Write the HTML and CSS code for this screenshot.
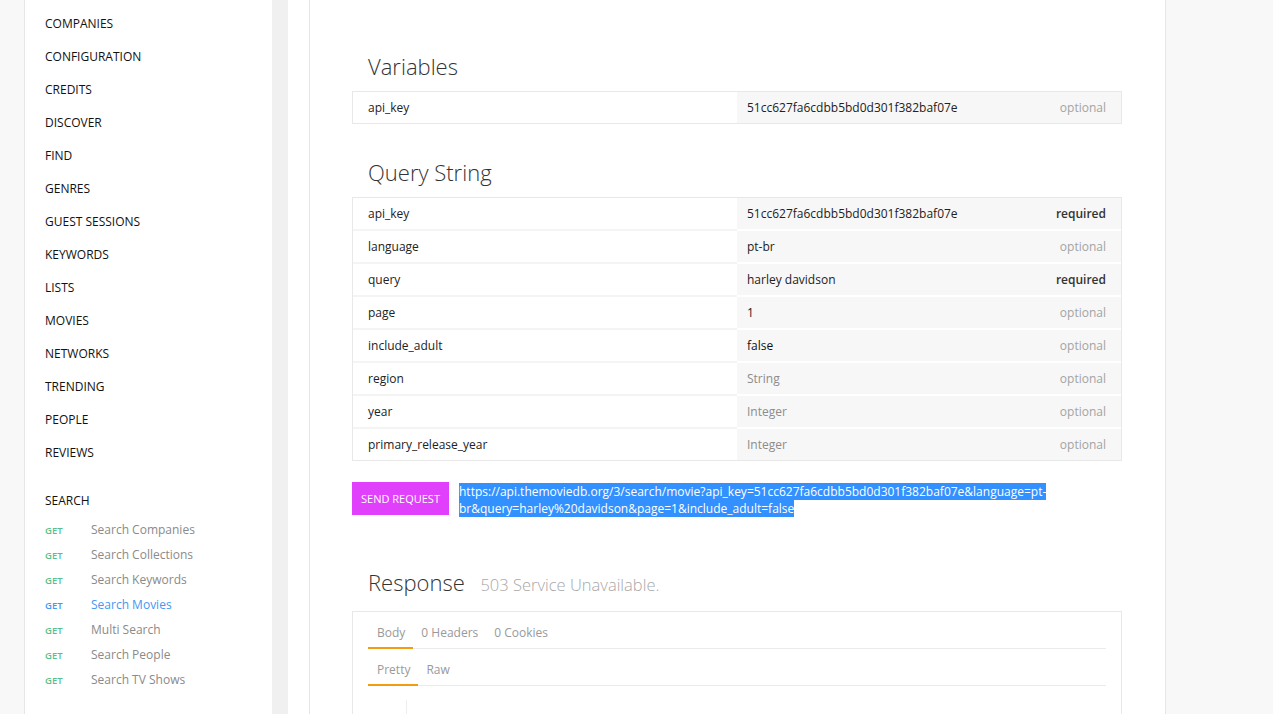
FILE: index.html
```html
<!DOCTYPE html>
<html>
<head>
<meta charset="utf-8">
<title>TMDB API - Search Movies</title>
<link rel="stylesheet" href="styles.css">
</head>
<body>
<div class="page">
  <nav class="sidebar">
    <ul class="groups">
      <li>COMPANIES</li>
      <li>CONFIGURATION</li>
      <li>CREDITS</li>
      <li>DISCOVER</li>
      <li>FIND</li>
      <li>GENRES</li>
      <li>GUEST SESSIONS</li>
      <li>KEYWORDS</li>
      <li>LISTS</li>
      <li>MOVIES</li>
      <li>NETWORKS</li>
      <li>TRENDING</li>
      <li>PEOPLE</li>
      <li>REVIEWS</li>
    </ul>
    <div class="group-title">SEARCH</div>
    <ul class="endpoints">
      <li><span class="method">GET</span><span class="ep">Search Companies</span></li>
      <li><span class="method">GET</span><span class="ep">Search Collections</span></li>
      <li><span class="method">GET</span><span class="ep">Search Keywords</span></li>
      <li class="active"><span class="method">GET</span><span class="ep">Search Movies</span></li>
      <li><span class="method">GET</span><span class="ep">Multi Search</span></li>
      <li><span class="method">GET</span><span class="ep">Search People</span></li>
      <li><span class="method">GET</span><span class="ep">Search TV Shows</span></li>
    </ul>
  </nav>
  <div class="scroll-track"></div>
  <main class="main">
    <h2 class="section-title">Variables</h2>
    <div class="params">
      <div class="row">
        <div class="name">api_key</div>
        <div class="value"><span>51cc627fa6cdbb5bd0d301f382baf07e</span><span class="flag">optional</span></div>
      </div>
    </div>

    <h2 class="section-title second">Query String</h2>
    <div class="params">
      <div class="row">
        <div class="name">api_key</div>
        <div class="value"><span>51cc627fa6cdbb5bd0d301f382baf07e</span><span class="flag req">required</span></div>
      </div>
      <div class="row">
        <div class="name">language</div>
        <div class="value"><span>pt-br</span><span class="flag">optional</span></div>
      </div>
      <div class="row">
        <div class="name">query</div>
        <div class="value"><span>harley davidson</span><span class="flag req">required</span></div>
      </div>
      <div class="row">
        <div class="name">page</div>
        <div class="value"><span>1</span><span class="flag">optional</span></div>
      </div>
      <div class="row">
        <div class="name">include_adult</div>
        <div class="value"><span class="strong">false</span><span class="flag">optional</span></div>
      </div>
      <div class="row">
        <div class="name">region</div>
        <div class="value"><span class="placeholder">String</span><span class="flag">optional</span></div>
      </div>
      <div class="row">
        <div class="name">year</div>
        <div class="value"><span class="placeholder">Integer</span><span class="flag">optional</span></div>
      </div>
      <div class="row">
        <div class="name">primary_release_year</div>
        <div class="value"><span class="placeholder">Integer</span><span class="flag">optional</span></div>
      </div>
    </div>

    <div class="actions">
      <button class="send">SEND REQUEST</button>
      <div class="url"><span class="selected">https://api.themoviedb.org/3/search/movie?api_key=51cc627fa6cdbb5bd0d301f382baf07e&amp;language=pt-<br>br&amp;query=harley%20davidson&amp;page=1&amp;include_adult=false</span></div>
    </div>

    <h2 class="section-title response-title">Response <span class="status">503 Service Unavailable.</span></h2>
    <div class="response">
      <div class="tabs">
        <span class="tab active">Body</span>
        <span class="tab">0 Headers</span>
        <span class="tab">0 Cookies</span>
      </div>
      <div class="tabs sub">
        <span class="tab active">Pretty</span>
        <span class="tab">Raw</span>
      </div>
      <div class="code">
        <div class="gutter"></div>
        <div class="code-body"></div>
      </div>
    </div>
  </main>
</div>
</body>
</html>
```

FILE: styles.css
```css
* { box-sizing: border-box; }

html, body {
  margin: 0;
  padding: 0;
}

body {
  background: #f8f8f8;
  font-family: "Open Sans", "Liberation Sans", sans-serif;
  font-size: 12px;
  color: #333;
  height: 714px;
  overflow: hidden;
}

.page {
  display: flex;
  margin-left: 24px;
  width: 1142px;
  height: 714px;
  background: #fff;
  border-left: 1px solid #e6e6e6;
  border-right: 1px solid #e6e6e6;
}

/* Sidebar */
.sidebar {
  width: 247px;
  flex: none;
  padding: 7px 0 0 20px;
}

.groups, .endpoints {
  list-style: none;
  margin: 0;
  padding: 0;
}

.groups li {
  line-height: 33px;
  color: #111;
  font-size: 12px;
}

.group-title {
  margin-top: 15px;
  line-height: 33px;
  color: #111;
  font-size: 12px;
}

.endpoints li {
  display: flex;
  align-items: center;
  height: 25px;
}

.method {
  width: 46px;
  font-size: 9.5px;
  font-weight: 600;
  color: #5bbf8b;
  padding-top: 1px;
}

.ep {
  color: #8a8a8a;
  font-size: 12px;
}

.endpoints li.active .method,
.endpoints li.active .ep {
  color: #4498f2;
}

.scroll-track {
  width: 16px;
  flex: none;
  background: #f0f0f0;
  margin-right: 21px;
}

/* Main */
.main {
  flex: 1;
  border-left: 1px solid #e6e6e6;
  padding: 47px 43px 0 42px;
}

.section-title {
  margin: 0 0 6px;
  padding-left: 16px;
  font-size: 22px;
  font-weight: 300;
  line-height: 38px;
  color: #333;
}

.section-title.second {
  margin-top: 29px;
}

.params {
  width: 770px;
  border: 1px solid #e8e8e8;
}

.row {
  display: grid;
  grid-template-columns: 384px 1fr;
  height: 31px;
}

.row + .row {
  height: 33px;
}

.row + .row .name {
  border-top: 2px solid #f4f4f4;
}

.row + .row .value {
  border-top: 2px solid #fff;
}

.name {
  padding-left: 15px;
  display: flex;
  align-items: center;
  color: #222;
}

.value {
  background: #f7f7f7;
  display: flex;
  align-items: center;
  justify-content: space-between;
  padding: 0 15px 0 10px;
  color: #222;
}

.value .strong { color: #111; }
.value .placeholder { color: #8c8c8c; }

.flag { color: #a3a3a3; }
.flag.req { color: #333; font-weight: 600; }

.actions {
  display: flex;
  align-items: flex-start;
  gap: 10px;
  margin-top: 21px;
}

.send {
  flex: none;
  width: 97px;
  height: 33px;
  border: none;
  background: #e040fb;
  color: #fff;
  font-family: "Open Sans", "Liberation Sans", sans-serif;
  font-size: 11px;
  padding: 0;
}

.url {
  line-height: 17px;
  padding-top: 1px;
  color: #fff;
  font-size: 12px;
}

.selected {
  background: #3390ff;
  color: #fff;
}

.response-title {
  margin-top: 46px;
  margin-bottom: 7px;
}

.status {
  margin-left: 10px;
  font-size: 16.5px;
  color: #a8a8a8;
  font-weight: 300;
}

.response {
  width: 770px;
  height: 200px;
  border: 1px solid #e8e8e8;
  padding: 6px 15px 0 15px;
}

.tabs {
  display: flex;
  border-bottom: 1px solid #ebebeb;
}

.tabs.sub {
  margin-top: 6px;
}

.tab {
  padding: 6px 8px 6px 8px;
  line-height: 17px;
  color: #999;
  border-bottom: 2px solid transparent;
  margin-bottom: -1px;
}

.tab:first-child { padding-left: 9px; }

.tab.active {
  border-bottom-color: #f39c12;
}

.code {
  display: flex;
  margin-top: 14px;
  height: 100px;
}

.gutter {
  width: 39px;
  border-right: 1px solid #eeeeee;
}

.code-body { flex: 1; }
```
